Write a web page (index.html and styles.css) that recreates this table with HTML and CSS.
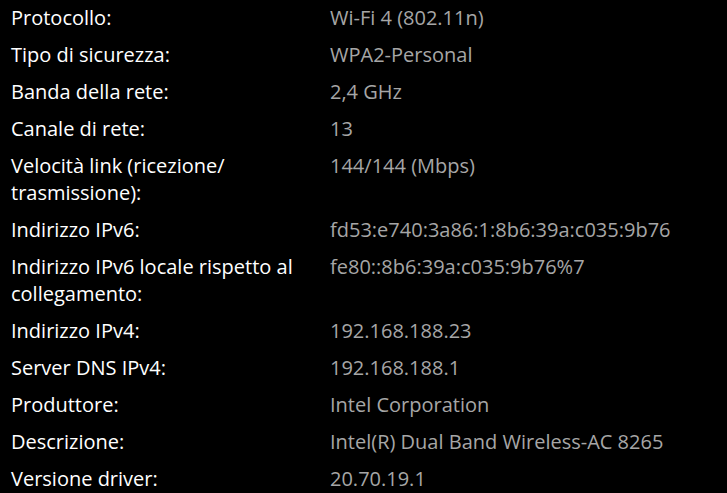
FILE: index.html
```html
<!DOCTYPE html>
<html lang="it">
<head>
<meta charset="utf-8">
<link rel="stylesheet" href="styles.css">
</head>
<body>
<dl class="props">
  <dt>Protocollo:</dt><dd>Wi-Fi 4 (802.11n)</dd>
  <dt>Tipo di sicurezza:</dt><dd>WPA2-Personal</dd>
  <dt>Banda della rete:</dt><dd>2,4 GHz</dd>
  <dt>Canale di rete:</dt><dd>13</dd>
  <dt>Velocità link (ricezione/ trasmissione):</dt><dd>144/144 (Mbps)</dd>
  <dt>Indirizzo IPv6:</dt><dd>fd53:e740:3a86:1:8b6:39a:c035:9b76</dd>
  <dt>Indirizzo IPv6 locale rispetto al collegamento:</dt><dd>fe80::8b6:39a:c035:9b76%7</dd>
  <dt>Indirizzo IPv4:</dt><dd>192.168.188.23</dd>
  <dt>Server DNS IPv4:</dt><dd>192.168.188.1</dd>
  <dt>Produttore:</dt><dd>Intel Corporation</dd>
  <dt>Descrizione:</dt><dd>Intel(R) Dual Band Wireless-AC 8265</dd>
  <dt>Versione driver:</dt><dd>20.70.19.1</dd>
</dl>
</body>
</html>
```
FILE: styles.css
```css
html, body {
  margin: 0;
  background: #000;
}
body {
  font-family: "Open Sans", "Noto Sans", sans-serif;
  font-size: 20px;
  line-height: 27px;
}
.props {
  margin: 0;
  padding: 4px 0 0 11px;
  display: grid;
  grid-template-columns: 300px 1fr;
  column-gap: 19px;
  row-gap: 10px;
}
.props dt {
  color: #fff;
}
.props dd {
  margin: 0;
  color: #a6a6a6;
}
```
